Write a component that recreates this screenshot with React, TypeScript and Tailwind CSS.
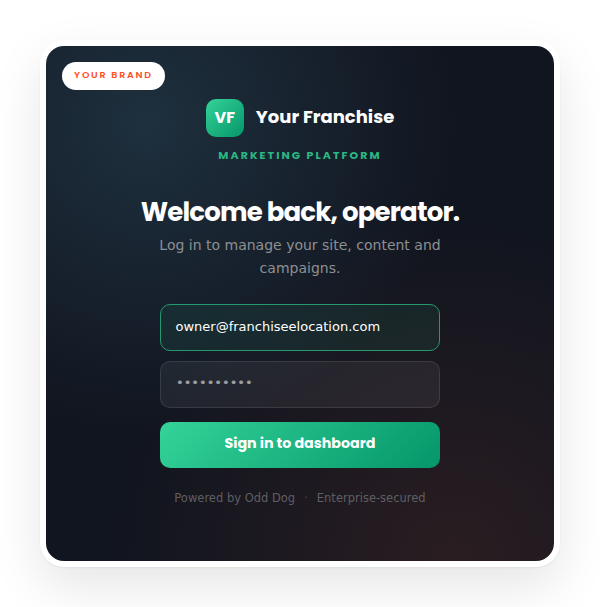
const DISPLAY = "font-['Poppins','Inter',sans-serif]";

function BrandMark() {
  return (
    <div className="flex h-[38px] items-center gap-3">
      <div className="flex h-[38px] w-[38px] items-center justify-center rounded-[10px] bg-[linear-gradient(135deg,#34d399,#059669)]">
        <span className={`${DISPLAY} text-[16px] leading-none font-bold text-white`}>VF</span>
      </div>
      <span className={`${DISPLAY} -mt-0.5 text-[18px] leading-none font-bold whitespace-nowrap text-white`}>
        Your Franchise
      </span>
    </div>
  );
}

export default function App() {
  return (
    <div className="flex h-[607px] w-[600px] justify-center overflow-hidden bg-white pt-10 font-['DejaVu_Sans',sans-serif]">
      <div className="h-[527px] w-[520px] rounded-[24px] bg-white p-1.5 shadow-[0_20px_50px_rgba(0,0,0,0.10),0_1px_2px_rgba(0,0,0,0.05)]">
        <div className="relative flex h-[515px] flex-col items-center rounded-[18px] bg-[#11151f] bg-[radial-gradient(circle_at_20%_15%,#1e303e,transparent_52%),radial-gradient(circle_at_80%_100%,rgba(255,100,50,0.1),transparent_52%)] pt-[53px]">
          <div className="absolute top-4 left-4 flex h-7 w-[103px] items-center justify-center rounded-full bg-white">
            <span className={`${DISPLAY} -mt-0.5 text-[9.5px] font-semibold tracking-[1.75px] whitespace-nowrap text-[#ff4f1f]`}>
              YOUR BRAND
            </span>
          </div>

          <BrandMark />
          <p className={`${DISPLAY} mt-[10px] h-4 text-[11px] leading-4 font-bold tracking-[2.05px] whitespace-nowrap text-[#2bb784]`}>
            MARKETING PLATFORM
          </p>

          <h1 className={`${DISPLAY} mt-[33px] h-8 text-[26px] leading-8 font-bold tracking-[-0.8px] whitespace-nowrap text-white`}>
            Welcome back, operator.
          </h1>
          <p className="mt-[6px] w-[300px] text-center text-[14px] leading-[23px] text-[#8e8f92]">
            Log in to manage your site, content and campaigns.
          </p>

          <div className="mt-6 flex w-[280px] flex-col">
            <div className="flex h-[47px] items-center rounded-[10px] border border-[#25996e] bg-[#34d399]/8 px-[14.5px] text-[13px] text-white">
              <span className="-mt-0.5">owner@franchiseelocation.com</span>
            </div>
            <div className="mt-[10px] flex h-[47px] items-center rounded-[10px] border border-white/10 bg-white/[0.06] px-[15px] text-[13px] text-white/55">
              <span className="-mt-[3px]">••••••••••</span>
            </div>
            <button className={`${DISPLAY} mt-[13.5px] h-[46px] rounded-[10px] bg-[linear-gradient(135deg,#34d399,#059669)] pb-px text-[14.25px] font-bold text-white`}>
              Sign in to dashboard
            </button>
          </div>

          <div className="mt-[23px] flex h-4 items-center gap-[9px] text-[11.5px] whitespace-nowrap text-[#5e5f63]">
            <span>Powered by Odd Dog</span>
            <span className="text-white/20">·</span>
            <span>Enterprise-secured</span>
          </div>
        </div>
      </div>
    </div>
  );
}
